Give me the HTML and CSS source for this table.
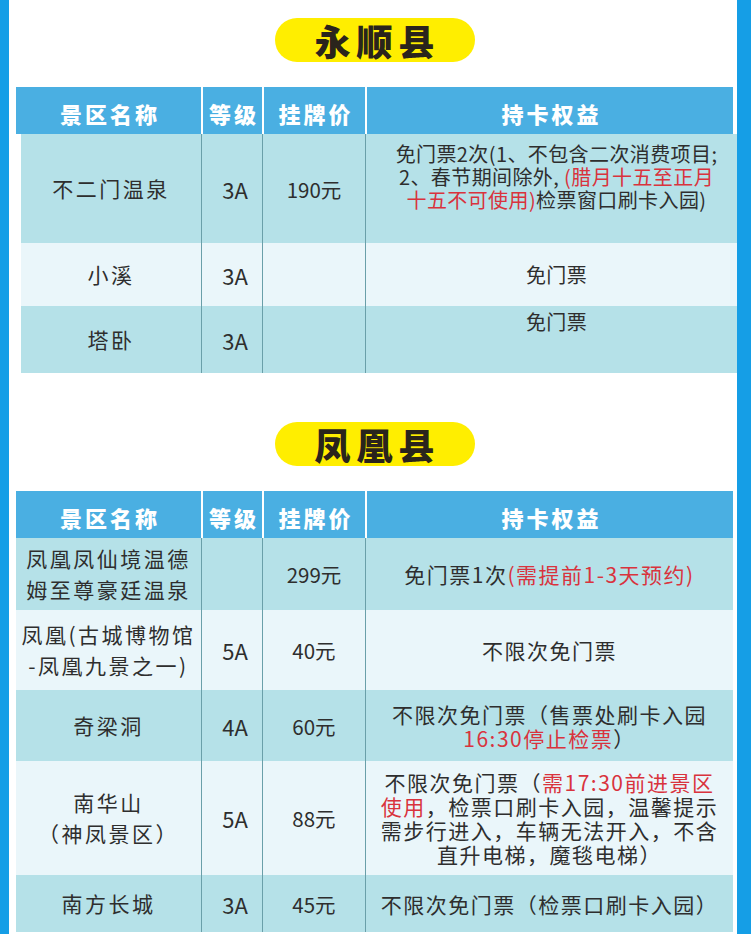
FILE: index.html
```html
<!DOCTYPE html>
<html lang="zh-CN">
<head>
<meta charset="utf-8">
<title>持卡权益</title>
<link rel="stylesheet" href="styles.css">
</head>
<body>
<div class="page">
  <section class="county">
    <div class="pill"><span>永顺县</span></div>
    <div class="tbl">
      <div class="row head">
        <div class="c">景区名称</div><div class="c">等级</div><div class="c">挂牌价</div><div class="c">持卡权益</div>
      </div>
      <div class="row body shift teal h109">
        <div class="c name"><span class="t">不二门温泉</span></div>
        <div class="c lvl"><span class="t">3A</span></div>
        <div class="c price"><span class="t">190元</span></div>
        <div class="c ben small top pt8"><span class="t">免门票2次(1、不包含二次消费项目;<br>2、春节期间除外, <span class="red">(腊月十五至正月<br>十五不可使用)</span>检票窗口刷卡入园)</span></div>
      </div>
      <div class="row body shift light h63">
        <div class="c name"><span class="t">小溪</span></div>
        <div class="c lvl"><span class="t">3A</span></div>
        <div class="c price"></div>
        <div class="c ben small"><span class="t">免门票</span></div>
      </div>
      <div class="row body shift teal h67">
        <div class="c name"><span class="t">塔卧</span></div>
        <div class="c lvl"><span class="t">3A</span></div>
        <div class="c price"></div>
        <div class="c ben small top pt4"><span class="t">免门票</span></div>
      </div>
    </div>
  </section>

  <section class="county second">
    <div class="pill"><span>凤凰县</span></div>
    <div class="tbl">
      <div class="row head">
        <div class="c">景区名称</div><div class="c">等级</div><div class="c">挂牌价</div><div class="c">持卡权益</div>
      </div>
      <div class="row body teal h72">
        <div class="c name"><span class="t">凤凰凤仙境温德<br>姆至尊豪廷温泉</span></div>
        <div class="c lvl"></div>
        <div class="c price"><span class="t">299元</span></div>
        <div class="c ben"><span class="t">免门票1次<span class="red">(需提前1-3天预约)</span></span></div>
      </div>
      <div class="row body light h80">
        <div class="c name"><span class="t">凤凰(古城博物馆<br>-凤凰九景之一)</span></div>
        <div class="c lvl"><span class="t">5A</span></div>
        <div class="c price"><span class="t">40元</span></div>
        <div class="c ben"><span class="t">不限次免门票</span></div>
      </div>
      <div class="row body teal h71">
        <div class="c name"><span class="t">奇梁洞</span></div>
        <div class="c lvl"><span class="t">4A</span></div>
        <div class="c price"><span class="t">60元</span></div>
        <div class="c ben"><span class="t">不限次免门票（售票处刷卡入园<br><span class="red">16:30停止检票</span>）</span></div>
      </div>
      <div class="row body light h114">
        <div class="c name"><span class="t">南华山<br>（神凤景区）</span></div>
        <div class="c lvl"><span class="t">5A</span></div>
        <div class="c price"><span class="t">88元</span></div>
        <div class="c ben"><span class="t">不限次免门票（<span class="red">需17:30前进景区<br>使用</span>，检票口刷卡入园，温馨提示<br>需步行进入，车辆无法开入，不含<br>直升电梯，魔毯电梯）</span></div>
      </div>
      <div class="row body teal h57">
        <div class="c name"><span class="t">南方长城</span></div>
        <div class="c lvl"><span class="t">3A</span></div>
        <div class="c price"><span class="t">45元</span></div>
        <div class="c ben"><span class="t">不限次免门票（检票口刷卡入园）</span></div>
      </div>
    </div>
  </section>
</div>
</body>
</html>
```
FILE: styles.css
```css
html, body {
  margin: 0;
  padding: 0;
  background: #ffffff;
}
body {
  width: 751px;
  height: 934px;
  overflow: hidden;
  font-family: "Noto Sans CJK SC", "Noto Sans", sans-serif;
  color: #2e2e2e;
}
.page {
  box-sizing: border-box;
  width: 751px;
  min-height: 934px;
  border-left: 9px solid #159ee6;
  border-right: 14px solid #159ee6;
  padding: 18px 4px 0 7px;
  background: #ffffff;
}
.county.second {
  margin-top: 49px;
}
.pill {
  width: 200px;
  height: 44px;
  margin: 0 auto;
  background: #ffee00;
  border-radius: 22px;
  display: flex;
  align-items: center;
  justify-content: center;
}
.pill span {
  font-size: 36px;
  font-weight: 900;
  color: #2a241c;
  letter-spacing: 6px;
  padding-left: 6px;
  line-height: 44px;
}
.tbl {
  margin-top: 25px;
}
.row {
  display: grid;
  grid-template-columns: 185px 61px 103px 368px;
}
.row.shift {
  grid-template-columns: 180px 61px 103px 372px;
  margin-left: 5px;
  margin-right: -4px;
}
.c {
  box-sizing: border-box;
  display: flex;
  align-items: center;
  justify-content: center;
  text-align: center;
  white-space: nowrap;
}
.t {
  display: block;
}
.head {
  height: 47px;
  background: #4aafe2;
}
.head .c {
  color: #ffffff;
  font-size: 22px;
  font-weight: 900;
  letter-spacing: 3px;
  padding-left: 3px;
  padding-top: 4px;
}
.head .c + .c {
  border-left: 2px solid #ffffff;
}
.body .c + .c {
  border-left: 1px solid #6a9fa9;
}
.teal { background: #b5e1e8; }
.light { background: #eaf6fa; }
.h109 { height: 109px; }
.h63 { height: 63px; }
.h67 { height: 67px; }
.h72 { height: 72px; }
.h80 { height: 80px; }
.h71 { height: 71px; }
.h114 { height: 114px; }
.h57 { height: 57px; }
.name {
  font-size: 21px;
  letter-spacing: 2.5px;
  line-height: 31px;
}
.lvl {
  font-size: 22px;
  padding-left: 6px;
}
.price {
  font-size: 20.5px;
}
.ben {
  font-size: 21px;
  letter-spacing: 1.5px;
  line-height: 24px;
}
.ben.small {
  font-size: 20px;
  letter-spacing: 0.4px;
  line-height: 23px;
  padding-left: 10px;
}
.ben.top {
  align-items: flex-start;
}
.pt8 { padding-top: 8px; }
.pt4 { padding-top: 4px; }
.red {
  color: #d9333d;
}
```
